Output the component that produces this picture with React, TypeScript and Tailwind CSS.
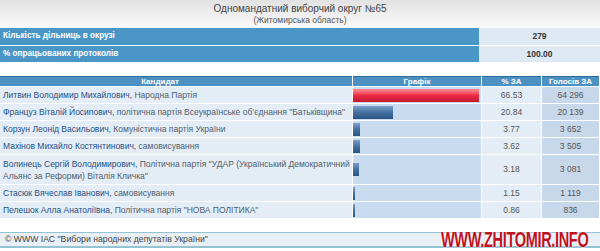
const candidates = [
  { name: 'Литвин Володимир Михайлович', party: 'Народна Партія', pct: 66.53, votes: '64 296', red: true },
  { name: 'Француз Віталій Йосипович', party: 'політична партія Всеукраїнське об\u2019єднання "Батьківщина"', pct: 20.84, votes: '20 139' },
  { name: 'Корзун Леонід Васильович', party: 'Комуністична партія України', pct: 3.77, votes: '3 652' },
  { name: 'Махінов Михайло Костянтинович', party: 'самовисування', pct: 3.62, votes: '3 505' },
  {
    name: 'Волинець Сергій Володимирович',
    party: 'Політична партія "УДАР (Український Демократичний',
    party2: 'Альянс за Реформи) Віталія Кличка"',
    pct: 3.18,
    votes: '3 081',
  },
  { name: 'Стасюк Вячеслав Іванович', party: 'самовисування', pct: 1.15, votes: '1 119' },
  { name: 'Пелешок Алла Анатоліївна', party: 'Політична партія "НОВА ПОЛІТИКА"', pct: 0.86, votes: '836' },
];

function Bar({ pct, red }: { pct: number; red?: boolean }) {
  const width = Math.max(2, Math.round(pct * 1.9));
  return (
    <div
      className={`h-[13px] ${
        red
          ? 'bg-gradient-to-b from-[#ff8a98] via-[#ea2a44] to-[#c41a30]'
          : 'bg-gradient-to-b from-[#7d9fcb] via-[#44709f] to-[#2b5485]'
      }`}
      style={{ width }}
    />
  );
}

export default function App() {
  return (
    <div className="relative w-[600px] h-[251px] overflow-hidden bg-white font-['Liberation_Sans',Arial,sans-serif]">
      {/* title */}
      <div className="h-[28px] bg-gradient-to-b from-[#e2e2e2] to-[#fafafa] text-center pt-[2px]">
        <p className="text-[10px] leading-[13px] text-[#444]">Одномандатний виборчий округ №65</p>
        <p className="text-[8.5px] leading-[11px] text-[#555]">(Житомирська область)</p>
      </div>

      {/* summary */}
      <div className="grid grid-cols-[479px_121px] gap-y-px bg-white">
        <div className="h-[17px] bg-[#4a97c7] pl-[3px] flex items-center text-[8.2px] font-bold text-white">
          Кількість дільниць в окрузі
        </div>
        <div className="h-[17px] bg-[#dfe9f3] flex items-center justify-center text-[8.5px] font-bold text-[#333]">
          279
        </div>
        <div className="h-[16px] bg-[#4a97c7] pl-[3px] flex items-center text-[8.2px] font-bold text-white">
          % опрацьованих протоколів
        </div>
        <div className="h-[16px] bg-[#dfe9f3] flex items-center justify-center text-[8.5px] font-bold text-[#333]">
          100.00
        </div>
      </div>

      {/* results */}
      <div className="mt-[14px] grid grid-cols-[352px_128px_59px_57px] gap-px bg-white text-[8.5px]">
        <div className="h-[10px] bg-[#4c91c1] border-t border-[#2c6c9c] flex items-center justify-center pr-[32px] text-[8px] font-bold text-white">
          Кандидат
        </div>
        <div className="h-[10px] bg-[#4c91c1] border-t border-[#2c6c9c] flex items-center justify-center text-[8px] font-bold text-white">
          Графік
        </div>
        <div className="h-[10px] bg-[#4c91c1] border-t border-[#2c6c9c] flex items-center justify-center text-[8px] font-bold text-white">
          % ЗА
        </div>
        <div className="h-[10px] bg-[#4c91c1] border-t border-[#2c6c9c] flex items-center justify-center text-[8px] font-bold text-white">
          Голосів ЗА
        </div>

        {candidates.map((c) => (
          <div key={c.name} className="contents">
            <div
              className={`${c.party2 ? 'h-[29px]' : 'h-[16px]'} bg-[#e4edf6] pl-[3px] flex flex-col justify-center leading-[12px] whitespace-nowrap overflow-hidden`}
            >
              <span>
                <span className="text-[#1f4f86]">{c.name},</span>{' '}
                <span className="text-[#4f5e6e]">{c.party}</span>
              </span>
              {c.party2 && <span className="text-[#4f5e6e]">{c.party2}</span>}
            </div>
            <div className="bg-[#c9dbee] flex items-center">
              <Bar pct={c.pct} red={c.red} />
            </div>
            <div className="bg-[#e4edf6] flex items-center justify-center text-[#555]">{c.pct.toFixed(2)}</div>
            <div className="bg-[#c7d8eb] flex items-center justify-center text-[#555]">{c.votes}</div>
          </div>
        ))}
      </div>

      {/* footer */}
      <div className="mt-[14px] h-[16px] bg-[#e9f0f5] border-t border-b-2 border-[#94c4d2] pl-[5px] flex items-center text-[8.7px] text-[#444]">
        © WWW ІАС "Вибори народних депутатів України"
      </div>

      {/* watermark */}
      <div className="absolute left-[441px] top-[223px] origin-left scale-x-[0.66] text-[22px] font-bold tracking-[-0.5px] text-[#c0121e] [text-shadow:0_0_2px_#fff,0_0_2px_#fff] whitespace-nowrap">
        WWW.ZHITOMIR.INFO
      </div>
    </div>
  );
}
